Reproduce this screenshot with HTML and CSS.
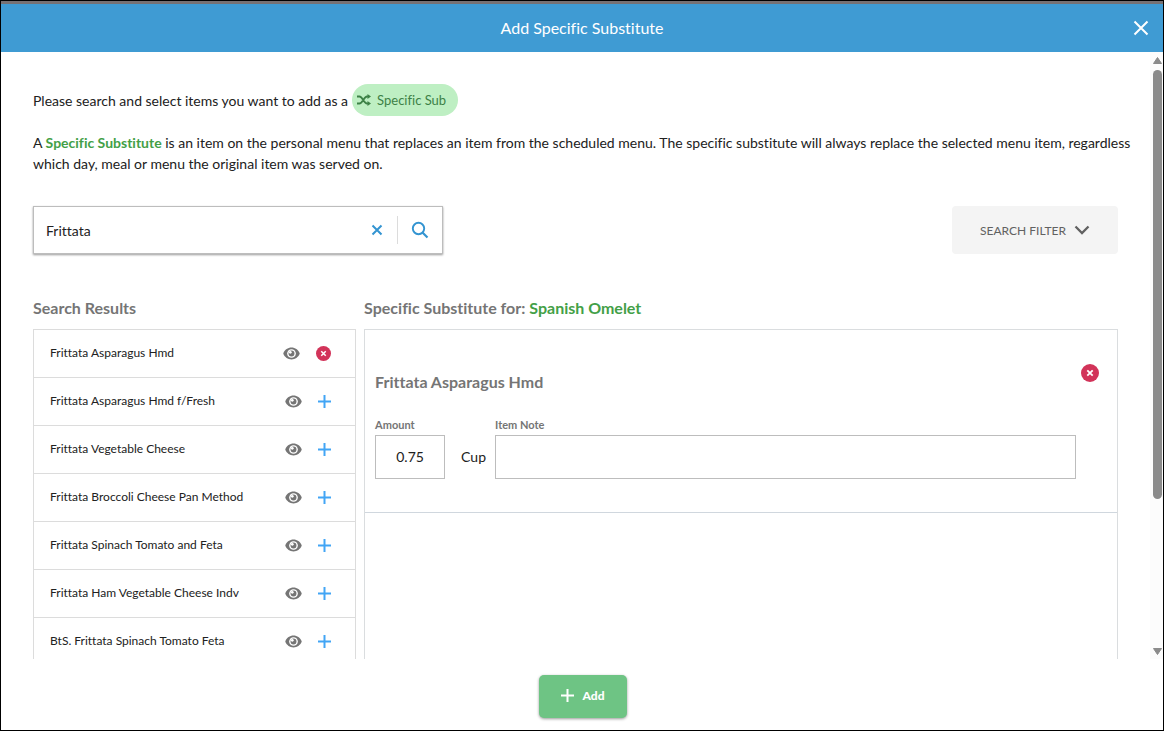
FILE: index.html
```html
<!DOCTYPE html>
<html lang="en">
<head>
<meta charset="utf-8">
<title>Add Specific Substitute</title>
<link rel="stylesheet" href="styles.css">
</head>
<body>
<svg class="sprite" aria-hidden="true">
  <symbol id="eye" viewBox="0 0 18 14"><path fill="currentColor" d="M9 0.5C5 0.5 1.8 3 0.3 6.4a1.4 1.4 0 0 0 0 1.2C1.8 11 5 13.5 9 13.5s7.200-2.500 8.700-5.900a1.400 1.400 0 0 0 0-1.200C16.200 3 13 .5 9 .5z"/><circle cx="9" cy="7" r="4.700" fill="#fff"/><circle cx="9" cy="7" r="3.200" fill="currentColor"/><circle cx="7.700" cy="5.700" r="1.500" fill="#fff"/></symbol>
  <symbol id="plus" viewBox="0 0 13 13"><path d="M6.500 0v13M0 6.500h13" fill="none" stroke="currentColor" stroke-width="2"/></symbol>
  <symbol id="remove" viewBox="0 0 18 18"><circle cx="9" cy="9" r="9" fill="#d23359"/><path d="M6.300 6.300l5.400 5.400M11.700 6.300l-5.400 5.400" stroke="#fff" stroke-width="1.800" fill="none"/></symbol>
</svg>
<div class="dialog" role="dialog" aria-labelledby="title">
  <header class="dialog-header">
    <h1 id="title">Add Specific Substitute</h1>
    <button class="icon-button close" type="button" aria-label="Close"><svg width="16" height="16" viewBox="0 0 16 16"><path d="M1.500 1.500l13 13M14.500 1.500l-13 13" stroke="currentColor" stroke-width="2" fill="none"/></svg></button>
  </header>
  <div class="dialog-body">
    <main class="content">
      <p class="intro"><span>Please search and select items you want to add as a</span>
        <span class="pill"><svg width="14" height="12" viewBox="0 0 14 12"><path d="M0 2.500h2.500C5.500 2.500 7 9.500 10 9.500h1.500M0 9.500h2.500C5.500 9.500 7 2.500 10 2.500h1.500" fill="none" stroke="currentColor" stroke-width="1.800"/><path d="M10.500 0L14 2.500 10.500 5zM10.500 7L14 9.500 10.500 12z" fill="currentColor"/></svg>Specific Sub</span></p>
      <p class="description">A <strong>Specific Substitute</strong> is an item on the personal menu that replaces an item from the scheduled menu. The specific substitute will always replace the selected menu item, regardless which day, meal or menu the original item was served on.</p>
      <div class="toolbar">
        <form class="search">
          <input type="text" aria-label="Search items" value="Frittata">
          <button class="icon-button clear" type="button" aria-label="Clear"><svg width="12" height="12" viewBox="0 0 12 12"><path d="M1.500 1.500l9 9M10.500 1.500l-9 9" stroke="currentColor" stroke-width="2" fill="none"/></svg></button>
          <button class="icon-button find" type="button" aria-label="Search"><svg width="18" height="18" viewBox="0 0 18 18"><circle cx="7.500" cy="7.500" r="5.700" stroke="currentColor" stroke-width="1.900" fill="none"/><path d="M11.500 11.500l5 5" stroke="currentColor" stroke-width="2.200" fill="none"/></svg></button>
        </form>
        <button class="filter" type="button">SEARCH FILTER<svg width="16" height="10" viewBox="0 0 16 10"><path d="M1.500 1.500L8 8l6.500-6.500" stroke="currentColor" stroke-width="2.300" fill="none"/></svg></button>
      </div>
      <div class="columns">
        <section class="results">
          <h2>Search Results</h2>
          <ul>
            <li><span>Frittata Asparagus Hmd</span><button class="icon-button view" type="button" aria-label="View"><svg><use href="#eye"/></svg></button><button class="icon-button chosen" type="button" aria-label="Remove"><svg><use href="#remove"/></svg></button></li>
            <li><span>Frittata Asparagus Hmd f/Fresh</span><button class="icon-button view" type="button" aria-label="View"><svg><use href="#eye"/></svg></button><button class="icon-button add-item" type="button" aria-label="Add item"><svg><use href="#plus"/></svg></button></li>
            <li><span>Frittata Vegetable Cheese</span><button class="icon-button view" type="button" aria-label="View"><svg><use href="#eye"/></svg></button><button class="icon-button add-item" type="button" aria-label="Add item"><svg><use href="#plus"/></svg></button></li>
            <li><span>Frittata Broccoli Cheese Pan Method</span><button class="icon-button view" type="button" aria-label="View"><svg><use href="#eye"/></svg></button><button class="icon-button add-item" type="button" aria-label="Add item"><svg><use href="#plus"/></svg></button></li>
            <li><span>Frittata Spinach Tomato and Feta</span><button class="icon-button view" type="button" aria-label="View"><svg><use href="#eye"/></svg></button><button class="icon-button add-item" type="button" aria-label="Add item"><svg><use href="#plus"/></svg></button></li>
            <li><span>Frittata Ham Vegetable Cheese Indv</span><button class="icon-button view" type="button" aria-label="View"><svg><use href="#eye"/></svg></button><button class="icon-button add-item" type="button" aria-label="Add item"><svg><use href="#plus"/></svg></button></li>
            <li><span>BtS. Frittata Spinach Tomato Feta</span><button class="icon-button view" type="button" aria-label="View"><svg><use href="#eye"/></svg></button><button class="icon-button add-item" type="button" aria-label="Add item"><svg><use href="#plus"/></svg></button></li>
          </ul>
        </section>
        <section class="selection">
          <h2>Specific Substitute for: <strong>Spanish Omelet</strong></h2>
          <div class="panel">
            <article class="item">
              <div class="item-main">
                <h3>Frittata Asparagus Hmd</h3>
                <div class="fields">
                  <div class="field amount"><label for="amount">Amount</label><input id="amount" type="text" value="0.75"></div>
                  <span class="unit">Cup</span>
                  <div class="field note"><label for="note">Item Note</label><input id="note" type="text"></div>
                </div>
              </div>
              <button class="icon-button remove" type="button" aria-label="Remove item"><svg><use href="#remove"/></svg></button>
            </article>
          </div>
        </section>
      </div>
    </main>
    <div class="scrollbar" aria-hidden="true">
      <svg width="9" height="7" viewBox="0 0 9 7"><path d="M4.500 0.500L8.500 6.500h-8z" fill="currentColor" stroke="currentColor" stroke-linejoin="round"/></svg>
      <div class="track"><div class="thumb"></div></div>
      <svg width="9" height="7" viewBox="0 0 9 7"><path d="M4.500 6.500L8.500 .5h-8z" fill="currentColor" stroke="currentColor" stroke-linejoin="round"/></svg>
    </div>
  </div>
  <footer class="dialog-footer">
    <button class="add" type="button"><svg><use href="#plus"/></svg>Add</button>
  </footer>
</div>
</body>
</html>
```
FILE: styles.css
```css
* { box-sizing: border-box; }
body { margin: 0; font: 14px/21px Lato, "Liberation Sans", sans-serif; font-variant-ligatures: none; color: #212121; }
h1, h2, h3, p, ul { margin: 0; padding: 0; }
button, input { font: inherit; font-variant-ligatures: none; color: inherit; }
svg { display: block; flex: none; }
.sprite { width: 0; height: 0; position: absolute; }
.icon-button { display: flex; align-items: center; justify-content: center; padding: 0; border: 0; background: none; }

.dialog { display: flex; flex-direction: column; height: 100vh; border: 1px solid #000; background: #fff; }
.dialog-header { display: grid; grid-template-columns: 44px 1fr 44px; align-items: center; height: 51px; border-top: 3px solid #777173; background: #3f9bd3; color: #fff; flex: none; }
.dialog-header h1 { grid-column: 2; text-align: center; font-size: 16px; line-height: 24px; font-weight: 400; }
.close { height: 48px; }

.dialog-body { display: flex; flex: 1; min-height: 0; }
.content { flex: 1; min-width: 0; overflow: hidden; display: flex; flex-direction: column; padding: 32px 32px 0; }
.intro { display: flex; align-items: center; gap: 4px; }
.pill { display: flex; align-items: center; gap: 6px; height: 32px; padding: 0 12px 0 5px; border-radius: 16px; background: #beefc3; color: #3d8146; font-size: 13px; }
.description { margin: 16px -24px 0 0; }
strong { color: #43a047; font-weight: 700; }

.toolbar { display: flex; justify-content: space-between; margin-top: 32px; }
.search { display: flex; align-items: center; width: 410px; height: 48px; border: 1px solid #bdbdbd; box-shadow: 0 1px 2px #0006; color: #3394d1; }
.search input { flex: 1; min-width: 0; height: 46px; padding: 0 12px; border: 0; outline: 0; background: none; color: #212121; }
.clear { width: 41px; height: 46px; }
.find { width: 45px; height: 28px; border-left: 1px solid #dcdcdc; }
.filter { display: flex; align-items: center; justify-content: center; gap: 8px; width: 166px; height: 48px; border: 0; border-radius: 4px; background: #f4f4f4; color: #616161; font-size: 12px; }

.columns { display: grid; grid-template-columns: 3fr 7fr; gap: 8px; flex: 1; min-height: 0; margin-top: 42px; }
.columns h2 { margin-bottom: 9px; font-size: 16px; line-height: 24px; font-weight: 700; color: #757575; }
.results { min-width: 0; min-height: 0; }
.results ul { list-style: none; border: 1px solid #dcdcdc; font-size: 12px; }
.results li { display: flex; align-items: center; height: 48px; padding: 0 24px 0 16px; border-bottom: 1px solid #dcdcdc; }
.results span { flex: 1; padding-bottom: 2px; }
.view { margin-right: 16px; color: #757575; }
.view svg { width: 17px; height: 13px; }
.chosen svg { width: 15px; height: 15px; }
.add-item { color: #42a5f5; }
.add-item svg { width: 13px; height: 13px; }

.selection { display: flex; flex-direction: column; min-width: 0; }
.panel { flex: 1; border: 1px solid #dadddf; border-bottom: 0; }
.item { display: flex; align-items: flex-start; padding: 34px 18px 33px 10px; border-bottom: 1px solid #d0d7de; }
.item-main { flex: 1; min-width: 0; padding-top: 6px; }
.item h3 { font-size: 16px; line-height: 24px; font-weight: 700; color: #757575; }
.fields { display: flex; align-items: flex-end; margin-top: 23px; }
.field { display: flex; flex-direction: column; }
.field label { font-size: 11px; line-height: 16px; margin-bottom: 2px; font-weight: 700; color: #757575; }
.field input { width: 100%; height: 44px; border: 1px solid #bdbdbd; padding: 0 12px 1px; }
.amount { width: 70px; }
.amount input { text-align: center; }
.unit { width: 50px; padding-left: 16px; line-height: 44px; }
.note { flex: 1; }
.remove { margin-left: 5px; }
.remove svg { width: 18px; height: 18px; }

.scrollbar { display: flex; flex-direction: column; align-items: flex-end; gap: 6px; width: 13px; padding: 5px 1px 4px 0; background: #fcfcfc; color: #8b8b8b; }
.track { flex: 1; width: 9px; }
.thumb { height: 75%; border-radius: 5px; background: #8b8b8b; }

.dialog-footer { display: flex; align-items: flex-start; justify-content: center; height: 71px; padding: 16px 0 0 2px; flex: none; }
.add { display: flex; align-items: center; justify-content: center; gap: 8px; width: 88px; height: 43px; padding: 0 6px 2px; border: 0; border-radius: 5px; background: #6ec484; color: #fff; font-size: 12px; font-weight: 900; box-shadow: 0 1px 3px #0006; }
.add svg { width: 13px; height: 13px; }
```
